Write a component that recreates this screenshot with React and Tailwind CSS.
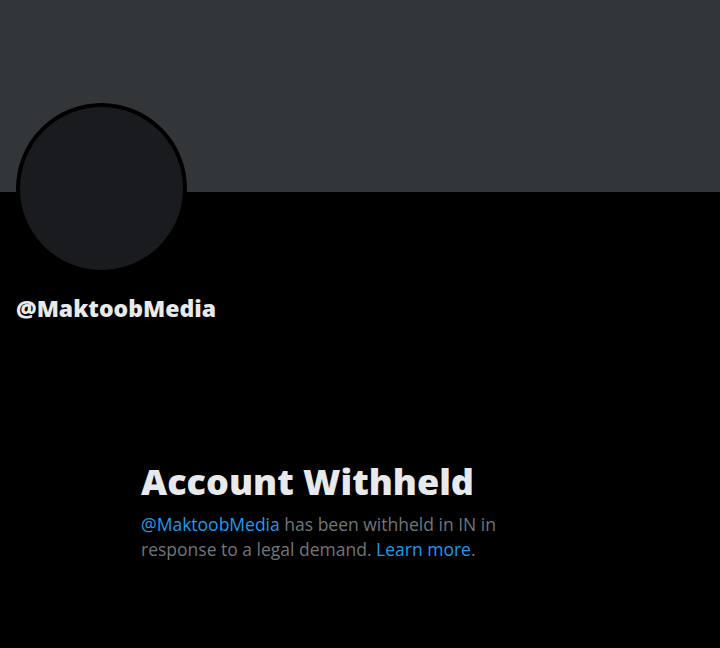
export default function App() {
  return (
    <div className="min-h-[648px] w-[720px] bg-black font-['Open_Sans',sans-serif]">
      <div className="h-[192px] bg-[#333639]" />
      <div className="ml-[16px] mt-[-89px] h-[171px] w-[171px] rounded-full border-[4px] border-black bg-[#1a1b1f]" />
      <div className="ml-[16px] mt-[20px] text-[23px] font-extrabold leading-[28px] text-[#e7e9ea]">
        @MaktoobMedia
      </div>
      <div className="ml-[141px] mt-[140px] w-[380px]">
        <h1 className="text-[36px] font-extrabold leading-[40px] text-[#e7e9ea]">Account Withheld</h1>
        <p className="mt-[10px] text-[17.5px] leading-[25px] text-[#71767b]">
          <span className="text-[#1d9bf0]">@MaktoobMedia</span> has been withheld in IN in response to a legal demand.{" "}
          <span className="text-[#1d9bf0]">Learn more</span>.
        </p>
      </div>
    </div>
  );
}
